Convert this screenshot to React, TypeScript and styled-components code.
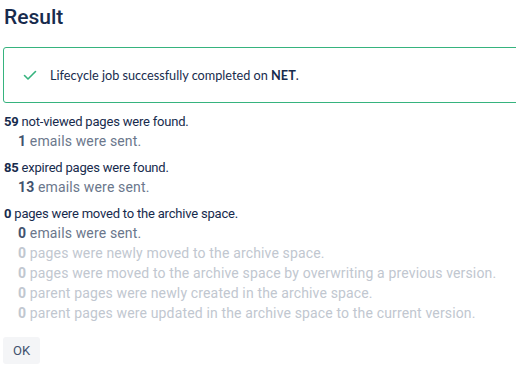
import React from "react";
import styled, { createGlobalStyle } from "styled-components";

const GlobalStyle = createGlobalStyle`
    html, body {
        margin: 0;
        padding: 0;
        background: #ffffff;
    }
    body {
        font-family: Roboto, "Liberation Sans", sans-serif;
        color: #172b4d;
        overflow: hidden;
    }
`;

const Page = styled.div`
    width: 516px;
    height: 366px;
    padding: 0 0 0 3px;
    box-sizing: border-box;
    overflow: hidden;
`;

const Title = styled.h1`
    margin: 0;
    padding: 3px 0 0 1px;
    height: 47px;
    box-sizing: border-box;
    font-size: 21px;
    font-weight: 500;
    line-height: 28px;
    color: #172b4d;
`;

const SuccessBox = styled.div`
    display: flex;
    align-items: center;
    gap: 13px;
    width: 560px;
    height: 56px;
    box-sizing: border-box;
    padding: 0 0 0 19px;
    border: 1px solid #36b37e;
    border-radius: 3px;
    font-family: Lato, "Open Sans", sans-serif;
    font-size: 12.7px;
    color: #172b4d;

    b {
        font-weight: 700;
    }
`;

const Stats = styled.div`
    display: flex;
    flex-direction: column;
    gap: 8px;
    padding: 10px 0 0 1px;
`;

const Group = styled.div`
    display: flex;
    flex-direction: column;
`;

const MainLine = styled.div`
    font-size: 13px;
    line-height: 18px;
    letter-spacing: -0.2px;
    color: #172b4d;

    b {
        font-weight: 700;
    }
`;

const SubLine = styled.div<{ $muted?: boolean }>`
    padding-left: 14px;
    font-size: 14px;
    line-height: 20px;
    letter-spacing: 0.15px;
    color: ${props => props.$muted ? "#c1c7d0" : "#6b778c"};

    b {
        font-weight: 700;
        color: ${props => props.$muted ? "#c1c7d0" : "#42526e"};
    }
`;

const Actions = styled.div`
    padding-top: 14px;
`;

const Button = styled.button`
    width: 37px;
    height: 27px;
    border: none;
    border-radius: 3px;
    background: #f4f5f7;
    color: #42526e;
    font-family: Roboto, "Liberation Sans", sans-serif;
    font-size: 13px;
    padding: 0;
    cursor: pointer;
`;

const CheckIcon = () => (
    <svg width="14" height="14" viewBox="0 0 14 14" fill="none">
        <path d="M1.5 7.5 L5 11 L12.5 3.5" stroke="#36b37e" strokeWidth="1.6" strokeLinecap="round" strokeLinejoin="round" />
    </svg>
);

const App = () => {
    return (
        <Page>
            <GlobalStyle />
            <Title>Result</Title>
            <SuccessBox>
                <CheckIcon />
                <span>Lifecycle job successfully completed on <b>NET</b>.</span>
            </SuccessBox>
            <Stats>
                <Group>
                    <MainLine><b>59</b> not-viewed pages were found.</MainLine>
                    <SubLine><b>1</b> emails were sent.</SubLine>
                </Group>
                <Group>
                    <MainLine><b>85</b> expired pages were found.</MainLine>
                    <SubLine><b>13</b> emails were sent.</SubLine>
                </Group>
                <Group>
                    <MainLine><b>0</b> pages were moved to the archive space.</MainLine>
                    <SubLine><b>0</b> emails were sent.</SubLine>
                    <SubLine $muted><b>0</b> pages were newly moved to the archive space.</SubLine>
                    <SubLine $muted><b>0</b> pages were moved to the archive space by overwriting a previous version.</SubLine>
                    <SubLine $muted><b>0</b> parent pages were newly created in the archive space.</SubLine>
                    <SubLine $muted><b>0</b> parent pages were updated in the archive space to the current version.</SubLine>
                </Group>
            </Stats>
            <Actions>
                <Button>OK</Button>
            </Actions>
        </Page>
    );
};

export default App;
